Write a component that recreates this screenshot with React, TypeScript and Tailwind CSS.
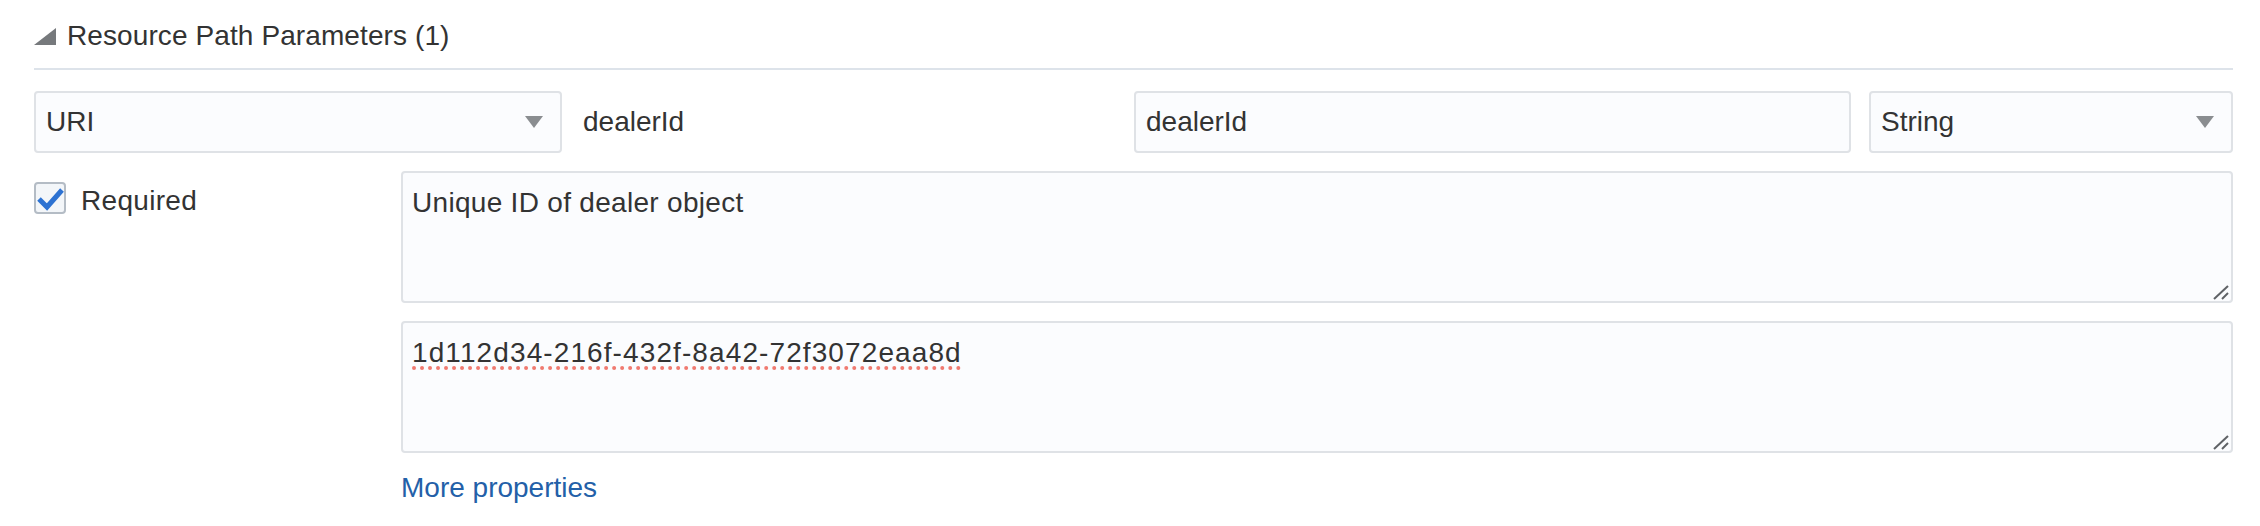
import React from 'react'

const boxBase = 'border-2 border-[#dfe2e6] rounded-[4px] bg-[#fbfcfe]'

function DownArrow() {
  return (
    <svg width="18" height="12" viewBox="0 0 18 12" className="shrink-0">
      <path d="M0 0 L18 0 L9 12 Z" fill="#8a8d90" />
    </svg>
  )
}

function SelectBox({ value, className }: { value: string; className: string }) {
  return (
    <div className={`${boxBase} ${className} flex items-center justify-between pl-[10px] pr-[17px]`}>
      <span>{value}</span>
      <DownArrow />
    </div>
  )
}

function ResizeHandle() {
  return (
    <svg width="16" height="15" viewBox="0 0 16 15" className="absolute right-[2px] bottom-[1px]">
      <path d="M1 14 L15 1" stroke="#5f6266" strokeWidth="2" />
      <path d="M9 14 L15 8" stroke="#5f6266" strokeWidth="2" />
    </svg>
  )
}

function TextArea({ children }: { children: React.ReactNode }) {
  return (
    <div className={`${boxBase} relative h-[132px] pt-[14px] pl-[9px]`}>
      {children}
      <ResizeHandle />
    </div>
  )
}

export default function App() {
  return (
    <div className="min-h-[526px] bg-white pl-[34px] pr-[27px] font-['Liberation_Sans',Arial,sans-serif] text-[28px] leading-[32px] text-[#333]">
      {/* section header */}
      <div className="flex items-center gap-[11px] pt-[20px] pb-[16px] border-b-2 border-[#dde3ea]">
        <svg width="22" height="17" viewBox="0 0 22 17" className="shrink-0">
          <path d="M0 17 L22 17 L22 0 Z" fill="#76797c" />
        </svg>
        <span className="tracking-[0.1px]">Resource Path Parameters (1)</span>
      </div>

      {/* parameter row */}
      <div className="mt-[21px] flex gap-[18px] h-[62px]">
        <SelectBox value="URI" className="w-[528px]" />
        <div className="w-[536px] flex items-center pl-[3px]">dealerId</div>
        <div className={`${boxBase} w-[717px] flex items-center pl-[10px]`}>dealerId</div>
        <SelectBox value="String" className="flex-1" />
      </div>

      <div className="mt-[18px] flex gap-[18px]">
        <div className="w-[349px] flex items-start gap-[15px]">
          <div className="relative mt-[11px] w-[32px] h-[32px] shrink-0 rounded-[4px] border-2 border-[#b4bcc5] bg-[#f3f6f9]">
            <svg width="32" height="32" viewBox="0 0 32 32" className="absolute -left-[2px] -top-[2px]">
              <path d="M5 17 L13 25 L28 8" stroke="#2d72d2" strokeWidth="5" fill="none" />
            </svg>
          </div>
          <span className="mt-[14px] tracking-[0.3px]">Required</span>
        </div>

        <div className="flex-1 flex flex-col gap-[18px]">
          <TextArea>
            <span className="tracking-[0.3px]">Unique ID of dealer object</span>
          </TextArea>
          <TextArea>
            <span className="tracking-[1.1px] underline decoration-dotted decoration-[#f07a70] decoration-[4px] underline-offset-[4px]">
              1d112d34-216f-432f-8a42-72f3072eaa8d
            </span>
          </TextArea>
          <div className="mt-[1px] text-[#2360a8]">More properties</div>
        </div>
      </div>
    </div>
  )
}
